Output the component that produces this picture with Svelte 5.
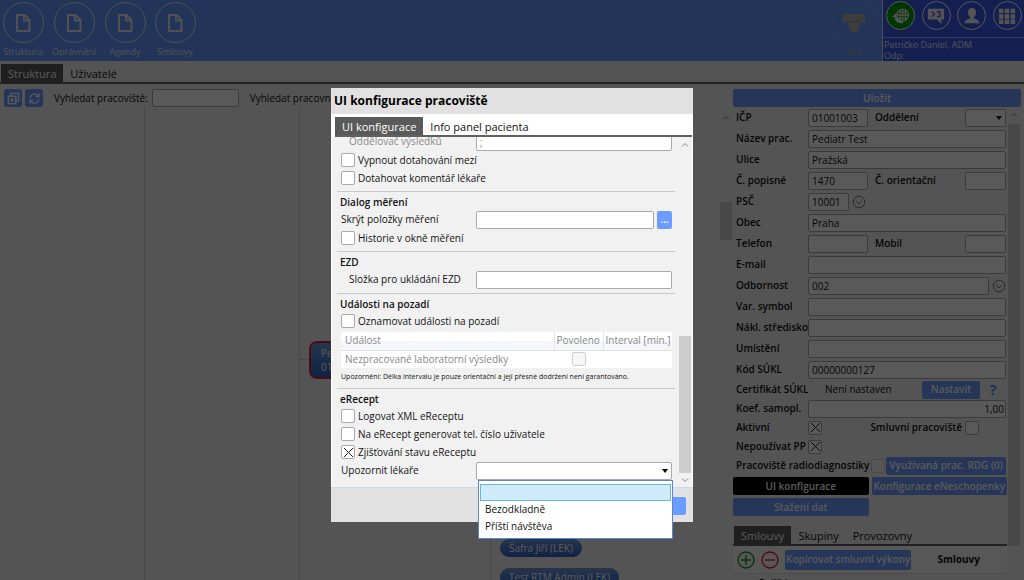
<script>
	const tools = ['Struktura', 'Oprávnění', 'Agendy', 'Smlouvy'];
	const notifyOptions = ['', 'Bezodkladně', 'Příští návštěva'];

	let workplace = $state({
		icp: '01001003',
		name: 'Pediatr Test',
		street: 'Pražská',
		houseNo: '1470',
		zip: '10001',
		city: 'Praha',
		specialty: '002',
		sukl: '00000000127',
		coef: '1,00'
	});

	let config = $state({
		separator: ';',
		noLimits: false,
		comment: false,
		history: false,
		notifyEvents: false,
		logXml: false,
		phone: false,
		checkState: true
	});

	let notify = $state('');
	let menuOpen = $state(true);

	const pick = (option) => {
		notify = option;
		menuOpen = false;
	};
</script>

{#snippet check(key, text)}
	<label class="check-row">
		<input type="checkbox" bind:checked={config[key]} />
		{text}
	</label>
{/snippet}

{#snippet chevron(d)}
	<svg class="chevron" viewBox="0 0 8 8"><path {d} /></svg>
{/snippet}

{#snippet roundChevron()}
	<svg viewBox="0 0 14 14" class="round-chevron">
		<circle cx="7" cy="7" r="5.8" />
		<path d="M4 6l3 3 3-3" />
	</svg>
{/snippet}

<div class="app">
	<header>
		<nav class="tools">
			{#each tools as tool}
				<button class="tool">
					<span class="ring">
						<svg viewBox="0 0 16 20"><path d="M2 2h7.500l5 5v11H2zM9 2v5.500h5.500" /></svg>
					</span>
					{tool}
				</button>
			{/each}
		</nav>
		<button class="tool print" disabled>
			<span class="ring">
				<svg viewBox="0 0 24 20">
					<path d="M1 1h22v9h-3.500V8h-15v2H1z" />
					<path d="M6 9h12v4h-2v6H8v-6H6z" />
				</svg>
			</span>
			Tisk
		</button>
		<div class="user">
			<div class="user-icons">
				<button class="round online" aria-label="Připojení">
					<svg viewBox="0 0 20 20">
						<circle cx="12" cy="9" r="6.500" class="line" />
						<path class="line" d="M12 2.500v13M5.500 9h13M6.500 5.500h11M6.500 12.500h11M9 3.500v11M15 3.500v11" />
						<path d="M0 11l5-5v3.500c0 4 3 6 7 6V18C6 18 3 15.500 3 11z" />
					</svg>
				</button>
				<button class="round" aria-label="Zprávy">
					<svg viewBox="0 0 20 20">
						<path fill-rule="evenodd" d="M1 2h18v12h-3v5l-5-5H1zM5 4.500v1.500l2.500 2L5 10v1.500l4-3v-1zM11 4.500V6h2.500v4H11v1.500h4v-7z" />
					</svg>
				</button>
				<button class="round" aria-label="Uživatel">
					<svg viewBox="0 0 20 20">
						<path d="M10 1c3 0 4.500 2 4.500 5 0 2.500-1 4-2.300 5.200v1.600c3 1 6 1.700 6 5.200H1.800c0-3.500 3-4.200 6-5.200v-1.600C6.500 10 5.500 8.500 5.500 6c0-3 1.500-5 4.500-5z" />
					</svg>
				</button>
				<button class="round" aria-label="Moduly">
					<svg viewBox="0 0 20 20">
						<path d="M1 2h5v5H1zM7.500 2h5v5h-5zM14 2h5v5h-5zM1 8h5v5H1zM7.500 8h5v5h-5zM14 8h5v5h-5zM1 14h5v5H1zM7.500 14h5v5h-5zM14 14h5v5h-5z" />
					</svg>
				</button>
			</div>
			<p>Petričko Daniel, ADM</p>
			<p>Odp:</p>
		</div>
	</header>

	<nav class="tabs main-tabs">
		<button class="tab active">Struktura</button>
		<button class="tab">Uživatelé</button>
	</nav>

	<div class="content">
		<main>
			<div class="search">
				<button class="square" aria-label="Rozbalit">
					<svg viewBox="0 0 14 14"><path d="M4.500 4V1.500h8v8H10M1.500 4.500h8v8h-8zM5.500 6.500v4M3.500 8.500h4" /></svg>
				</button>
				<button class="square" aria-label="Obnovit">
					<svg viewBox="0 0 14 14"><path d="M2 6c1-4 6-5 8.500-2.500L12 5M12 1.500V5H8.500M12 8c-1 4-6 5-8.500 2.500L2 9M2 12.500V9h3.500" /></svg>
				</button>
				<label for="find-place">Vyhledat pracoviště:</label>
				<input id="find-place" type="text" />
				<label for="find-worker">Vyhledat pracovníka:</label>
				<input id="find-worker" type="text" />
			</div>
			<div class="canvas">
				<i class="guide first"></i>
				<i class="guide second"></i>
				<i class="guide third"></i>
				<i class="link"></i>
				<div class="node place">Pe<br />01</div>
				<div class="node person">Šafra Jiří (LEK)</div>
				<div class="node person last">Test RTM Admin (LEK)</div>
			</div>
		</main>

		<div class="scroll outer">
			{@render chevron('M1 5.500l3-3 3 3')}
			<i class="thumb"></i>
		</div>

		<aside>
			<button class="blue save">Uložit</button>
			<div class="panel">
				<form>
					<div class="field">
						<label for="icp">IČP</label>
						<input id="icp" class="half" type="text" bind:value={workplace.icp} />
						<label for="dept" class="second">Oddělení</label>
						<span class="select small">
							<select id="dept"><option></option></select>
						</span>
					</div>
					<div class="field">
						<label for="name">Název prac.</label>
						<input id="name" type="text" bind:value={workplace.name} />
					</div>
					<div class="field">
						<label for="street">Ulice</label>
						<input id="street" type="text" bind:value={workplace.street} />
					</div>
					<div class="field">
						<label for="house">Č. popisné</label>
						<input id="house" class="half" type="text" bind:value={workplace.houseNo} />
						<label for="orient" class="second">Č. orientační</label>
						<input id="orient" class="small" type="text" />
					</div>
					<div class="field">
						<label for="zip">PSČ</label>
						<input id="zip" class="small" type="text" bind:value={workplace.zip} />
						{@render roundChevron()}
					</div>
					<div class="field">
						<label for="city">Obec</label>
						<input id="city" type="text" bind:value={workplace.city} />
					</div>
					<div class="field">
						<label for="phone">Telefon</label>
						<input id="phone" class="half" type="text" />
						<label for="mobile" class="second">Mobil</label>
						<input id="mobile" class="small" type="text" />
					</div>
					<div class="field">
						<label for="email">E-mail</label>
						<input id="email" type="text" />
					</div>
					<div class="field">
						<label for="spec">Odbornost</label>
						<input id="spec" type="text" bind:value={workplace.specialty} />
						{@render roundChevron()}
					</div>
					<div class="field">
						<label for="symbol">Var. symbol</label>
						<input id="symbol" type="text" />
					</div>
					<div class="field">
						<label for="centre">Nákl. středisko</label>
						<input id="centre" type="text" />
					</div>
					<div class="field">
						<label for="location">Umístění</label>
						<input id="location" type="text" />
					</div>
					<div class="field">
						<label for="sukl">Kód SÚKL</label>
						<input id="sukl" type="text" bind:value={workplace.sukl} />
					</div>
					<div class="field tight">
						<span class="name">Certifikát SÚKL</span>
						<span class="state">Není nastaven</span>
						<button type="button" class="blue set">Nastavit</button>
						<button type="button" class="help">?</button>
					</div>
					<div class="field tight">
						<label for="coef">Koef. samopl.</label>
						<input id="coef" class="number" type="text" bind:value={workplace.coef} />
					</div>
					<div class="field tight">
						<label for="active">Aktivní</label>
						<input id="active" type="checkbox" checked />
						<label for="contract" class="third">Smluvní pracoviště</label>
						<input id="contract" class="offset" type="checkbox" />
					</div>
					<div class="field tight">
						<label for="nopp">Nepoužívat PP</label>
						<input id="nopp" type="checkbox" checked />
					</div>
					<div class="field tight">
						<label for="rdg" class="wide">Pracoviště radiodiagnostiky</label>
						<input id="rdg" type="checkbox" disabled />
						<button type="button" class="blue rdg">Využívaná prac. RDG (0)</button>
					</div>
					<div class="actions">
						<button type="button" class="blue black">UI konfigurace</button>
						<button type="button" class="blue">Konfigurace eNeschopenky</button>
						<button type="button" class="blue">Stažení dat</button>
					</div>
					<nav class="tabs side-tabs">
						<button type="button" class="tab active">Smlouvy</button>
						<button type="button" class="tab">Skupiny</button>
						<button type="button" class="tab">Provozovny</button>
					</nav>
					<div class="contracts">
						<button type="button" class="sign add" aria-label="Přidat">
							<svg viewBox="0 0 18 18"><circle cx="9" cy="9" r="8" /><path d="M9 4v10M4 9h10" /></svg>
						</button>
						<button type="button" class="sign remove" aria-label="Odebrat">
							<svg viewBox="0 0 18 18"><circle cx="9" cy="9" r="8" /><path d="M4 9h10" /></svg>
						</button>
						<button type="button" class="blue copy">Kopírovat smluvní výkony</button>
						<strong>Smlouvy</strong>
					</div>
					<div class="insurer">Pojišť.</div>
				</form>
				<div class="scroll side">
					{@render chevron('M1 5.500l3-3 3 3')}
					<i class="thumb"></i>
				</div>
			</div>
		</aside>
	</div>
</div>

<div class="overlay">
	<div class="dialog" role="dialog" aria-labelledby="dialog-title">
		<h1 id="dialog-title">UI konfigurace pracoviště</h1>
		<nav class="tabs dialog-tabs">
			<button class="tab active">UI konfigurace</button>
			<button class="tab">Info panel pacienta</button>
		</nav>
		<div class="body">
			<div class="sections">
				<section>
					<div class="row muted">
						<label class="indent" for="separator">Oddělovač výsledků</label>
						<input id="separator" type="text" disabled bind:value={config.separator} />
					</div>
					{@render check('noLimits', 'Vypnout dotahování mezí')}
					{@render check('comment', 'Dotahovat komentář lékaře')}
				</section>
				<section>
					<h2>Dialog měření</h2>
					<div class="row">
						<label for="hide-items">Skrýt položky měření</label>
						<input id="hide-items" type="text" />
						<button class="blue dots">...</button>
					</div>
					{@render check('history', 'Historie v okně měření')}
				</section>
				<section>
					<h2>EZD</h2>
					<div class="row">
						<label class="indent" for="folder">Složka pro ukládání EZD</label>
						<input id="folder" type="text" />
					</div>
				</section>
				<section>
					<h2>Události na pozadí</h2>
					{@render check('notifyEvents', 'Oznamovat události na pozadí')}
					<table>
						<thead>
							<tr>
								<th>Událost</th>
								<th class="allowed">Povoleno</th>
								<th class="interval">Interval [min.]</th>
							</tr>
						</thead>
						<tbody>
							<tr>
								<td>Nezpracované laboratorní výsledky</td>
								<td><input type="checkbox" disabled aria-label="Povoleno" /></td>
								<td></td>
							</tr>
						</tbody>
					</table>
					<p class="note">Upozornění: Délka intervalu je pouze orientační a její přesné dodržení není garantováno.</p>
				</section>
				<section>
					<h2>eRecept</h2>
					{@render check('logXml', 'Logovat XML eReceptu')}
					{@render check('phone', 'Na eRecept generovat tel. číslo uživatele')}
					{@render check('checkState', 'Zjišťování stavu eReceptu')}
					<div class="row">
						<label for="notify">Upozornit lékaře</label>
						<div class="combo">
							<span class="select">
								<select id="notify" bind:value={notify}>
									{#each notifyOptions as option}
										<option value={option}>{option}</option>
									{/each}
								</select>
							</span>
							{#if menuOpen}
								<div class="menu">
									{#each notifyOptions as option}
										<button class:selected={option === notify} aria-label={option || 'Prázdné'} onclick={() => pick(option)}>{option}</button>
									{/each}
								</div>
							{/if}
						</div>
					</div>
				</section>
			</div>
			<div class="scroll inner">
				{@render chevron('M1 5.500l3-3 3 3')}
				<i class="thumb"></i>
				{@render chevron('M1 2.500l3 3 3-3')}
			</div>
		</div>
		<footer>
			<button class="blue ok" aria-label="Uložit konfiguraci"></button>
		</footer>
	</div>
</div>

<style>
	:global(body) {
		margin: 0;
		background: #f0f0f0;
	}

	.app,
	.overlay {
		font-family: 'Open Sans', 'Noto Sans', sans-serif;
		font-size: 10px;
		line-height: 15px;
		color: #111;
	}

	.app *,
	.overlay * {
		box-sizing: border-box;
	}

	.app {
		height: 100vh;
		display: flex;
		flex-direction: column;
		overflow: hidden;
		background: #f0f0f0;
	}

	button,
	input,
	select {
		font: inherit;
		color: inherit;
		margin: 0;
		padding: 0;
	}

	button {
		border: 0;
		background: none;
		white-space: nowrap;
	}

	p {
		margin: 0;
	}

	input[type='text'],
	select {
		height: 18px;
		min-width: 0;
		padding: 0 3px;
		border: 1px solid #aaa;
		border-radius: 2px;
		background: #fff;
	}

	input[type='checkbox'] {
		appearance: none;
		flex: none;
		width: 14px;
		height: 14px;
		border: 1px solid #aaa;
		border-radius: 2px;
		background: #fff;
	}

	input[type='checkbox']:checked {
		background:
			linear-gradient(45deg, transparent 46%, #222 46%, #222 54%, transparent 54%) center / 9px 9px no-repeat,
			linear-gradient(-45deg, transparent 46%, #222 46%, #222 54%, transparent 54%) center / 9px 9px no-repeat,
			#fff;
	}

	input[type='checkbox']:disabled {
		border-color: #d0d0d0;
		background: #f6f6f6;
	}

	.select {
		position: relative;
		display: flex;
	}

	.select select {
		appearance: none;
		width: 100%;
	}

	/* drop-down arrow */
	.select::after {
		content: '';
		position: absolute;
		right: 4px;
		top: 7px;
		border: 3px solid transparent;
		border-top: 4px solid #000;
		border-bottom: 0;
	}

	.blue {
		height: 18px;
		border-radius: 2px;
		background: #6b9cff;
		color: #fff;
		font-weight: 600;
	}

	/* Tabs */
	.tabs {
		display: flex;
		border-bottom: 2px solid #606060;
		font-size: 11px;
	}

	.tab {
		padding: 0 7px;
		height: 18px;
	}

	.tab.active {
		background: #5a5a5a;
		color: #fff;
	}

	.main-tabs {
		padding: 3px 0 0 1px;
	}

	/* Header */
	header {
		display: flex;
		height: 61px;
		flex: none;
		background: #6199ff;
		color: #e4e6ee;
		font-size: 9px;
	}

	.tools {
		display: flex;
		flex: 1;
		gap: 8px;
		padding-left: 2px;
	}

	.tool {
		display: flex;
		flex-direction: column;
		align-items: center;
		min-width: 42px;
		padding-top: 2px;
		gap: 1px;
	}

	.ring {
		display: flex;
		align-items: center;
		justify-content: center;
		width: 41px;
		height: 41px;
		border: 1px solid #dce4f4;
		border-radius: 50%;
	}

	.ring svg {
		width: 16px;
		height: 20px;
		fill: none;
		stroke: #e8e8e8;
		stroke-width: 2;
	}

	.print {
		margin-right: 7px;
		color: #a8a8b0;
	}

	.print .ring {
		border-color: #78a0ea;
	}

	.print .ring svg {
		width: 24px;
		fill: #b4b0a8;
		stroke: none;
	}

	.user {
		width: 142px;
		border-left: 1px solid #dde;
		background: #385be8;
	}

	.user p {
		padding-left: 1px;
		line-height: 11px;
	}

	.user-icons {
		display: flex;
		justify-content: space-between;
		height: 38px;
		margin-bottom: 1px;
		padding: 1px 2px 0 3px;
		border-bottom: 1px solid #90a8ff;
	}

	.round {
		display: flex;
		align-items: center;
		justify-content: center;
		width: 29px;
		height: 29px;
		border: 1px solid #fff;
		border-radius: 50%;
	}

	.round svg {
		width: 18px;
		height: 18px;
		fill: #f0f0f0;
	}

	.round .line {
		fill: none;
		stroke: #f0f0f0;
		stroke-width: 1.2;
	}

	.online {
		background: #009a00;
	}

	/* Structure canvas */
	.content {
		display: flex;
		flex: 1;
		min-height: 0;
	}

	main {
		display: flex;
		flex-direction: column;
		flex: 1;
		min-width: 0;
	}

	.search {
		display: flex;
		align-items: center;
		gap: 3px;
		padding: 5px 0 0 4px;
		white-space: nowrap;
		overflow: hidden;
	}

	.search label {
		margin: 0 1px 0 8px;
	}

	.search input {
		width: 87px;
	}

	.square {
		display: flex;
		align-items: center;
		justify-content: center;
		width: 18px;
		height: 18px;
		border-radius: 3px;
		background: #6b9cff;
	}

	.square svg {
		width: 13px;
		height: 13px;
		fill: none;
		stroke: #fff;
		stroke-width: 1.5;
	}

	.canvas {
		position: relative;
		flex: 1;
		overflow: hidden;
	}

	.guide {
		position: absolute;
		top: 0;
		bottom: 0;
		border-left: 1px solid #ccc;
	}

	.guide.first {
		left: 144px;
	}

	.guide.second {
		left: 299px;
	}

	.guide.third {
		left: 490px;
	}

	.link {
		position: absolute;
		left: 299px;
		top: 252px;
		width: 12px;
		border-top: 1px solid #ccc;
	}

	.node {
		position: absolute;
		color: #fff;
		background: linear-gradient(#6a9bd8, #2f5fc8);
	}

	.place {
		left: 309px;
		top: 234px;
		width: 120px;
		padding: 3px 10px;
		border: 2px solid #c03040;
		border-radius: 8px;
		line-height: 14px;
	}

	.person {
		left: 500px;
		top: 432px;
		padding: 2px 9px 1px;
		border-radius: 9px;
	}

	.person.last {
		top: 461px;
	}

	/* Scrollbars */
	.scroll {
		display: flex;
		flex-direction: column;
		align-items: center;
		flex: none;
		width: 14px;
	}

	.chevron {
		width: 8px;
		height: 8px;
		fill: none;
		stroke: #888;
	}

	.thumb {
		width: 12px;
		background: #cdcdcd;
	}

	.outer {
		padding-top: 30px;
	}

	.outer .thumb {
		height: 38px;
		margin-top: 80px;
	}

	.side .thumb {
		flex: 1;
		margin: 5px 0 34px;
	}

	.side {
		padding-top: 4px;
	}

	.inner {
		padding: 4px 0 3px;
	}

	.inner .thumb {
		height: 137px;
		margin: auto 0 3px;
	}

	/* Workplace detail */
	aside {
		display: flex;
		flex-direction: column;
		width: 291px;
		padding: 5px 3px 0 0;
	}

	.save {
		flex: none;
	}

	.panel {
		display: flex;
		flex: 1;
		min-height: 0;
	}

	form {
		flex: 1;
		min-width: 0;
		overflow: hidden;
	}

	.field {
		display: flex;
		align-items: center;
		height: 21px;
		padding: 0 1px 0 3px;
	}

	.field.tight {
		height: 19px;
	}

	.field label,
	.field .name {
		flex: none;
		width: 72px;
		font-weight: 600;
		white-space: nowrap;
	}

	.field input[type='text'] {
		flex: 1;
	}

	.field input.half {
		flex: none;
		width: 60px;
	}

	.field label.second {
		flex: 1;
		padding-left: 7px;
	}

	.field .small,
	.field input.small {
		flex: none;
		width: 41px;
	}

	.field label.third {
		width: auto;
		margin-left: auto;
	}

	.field .offset {
		margin: 0 27px 0 3px;
	}

	.field label.wide {
		width: auto;
		margin-right: 2px;
	}

	.round-chevron {
		width: 14px;
		height: 14px;
		margin-left: 3px;
		fill: none;
		stroke: #777;
	}

	.state {
		flex: 1;
		padding-left: 17px;
	}

	.set {
		width: 58px;
	}

	.help {
		width: 26px;
		color: #5c8cff;
		font-size: 15px;
		font-weight: 700;
	}

	.field input.number {
		padding: 0 1px;
		text-align: right;
	}

	.rdg {
		flex: none;
		margin-left: auto;
		padding: 0 3px;
	}

	.actions {
		display: grid;
		grid-template-columns: 1fr 1fr;
		gap: 3px;
		padding-top: 2px;
	}

	.actions .black {
		background: #000;
	}

	.side-tabs {
		margin-top: 10px;
		padding-left: 1px;
	}

	.contracts {
		display: flex;
		align-items: center;
		gap: 6px;
		height: 28px;
		padding-left: 4px;
		border-bottom: 1px solid #ddd;
		background: #f8f8f8;
	}

	.contracts strong {
		flex: 1;
		padding-right: 7px;
		text-align: center;
	}

	.sign {
		height: 18px;
	}

	.sign svg {
		width: 18px;
		height: 18px;
		fill: none;
		stroke-width: 1.3;
	}

	.add {
		stroke: #0a8a20;
	}

	.remove {
		stroke: #e01020;
	}

	.copy {
		height: 20px;
		padding: 0 1px;
	}

	.insurer {
		padding: 2px 0 0 26px;
		font-weight: 600;
	}

	/* Dialog */
	.overlay {
		position: fixed;
		inset: 0;
		display: flex;
		justify-content: center;
		align-items: flex-start;
		padding-top: 88px;
		background: rgba(0, 0, 0, 0.65);
	}

	.dialog {
		position: relative;
		width: 362px;
		background: #fff;
	}

	h1 {
		margin: 0;
		padding: 4px 3px;
		background: #e1e1e1;
		color: #000;
		font-size: 12px;
		line-height: 18px;
		font-weight: 700;
	}

	.dialog-tabs {
		margin: 0 1px 0 4px;
		padding-top: 3px;
	}

	.body {
		display: flex;
		height: 350px;
		margin: 0 1px;
		overflow: hidden;
		background: #f1f1f1;
	}

	/* scrolled to the end, the first row is cut by the tabs */
	.sections {
		display: flex;
		flex: 1;
		flex-direction: column;
		justify-content: flex-end;
		padding: 0 3px 0 5px;
	}

	section {
		flex: none;
		padding: 3px 3px 4px 4px;
		border-bottom: 1px solid #c8c8c8;
	}

	section:last-child {
		padding-bottom: 7px;
		border: 0;
	}

	h2 {
		margin: 0 -1px;
		color: #111;
		font-size: 10px;
		line-height: 15px;
		font-weight: 600;
	}

	.row {
		display: flex;
		align-items: center;
		height: 19px;
	}

	.row label {
		flex: none;
		width: 135px;
	}

	.row .indent {
		padding-left: 8px;
	}

	.row input {
		flex: 1;
	}

	.muted {
		color: #8a8a8a;
	}

	.dots {
		width: 15px;
		margin-left: 3px;
	}

	.check-row {
		display: flex;
		align-items: center;
		gap: 3px;
		height: 18px;
	}

	table {
		width: 100%;
		margin-top: 2px;
		border-collapse: collapse;
		table-layout: fixed;
		background: #fff;
		color: #888;
	}

	th,
	td {
		height: 18px;
		padding: 0 4px;
		text-align: left;
		font-weight: 400;
		white-space: nowrap;
	}

	th {
		border-bottom: 1px solid #e0e0e0;
		background: linear-gradient(#fff 50%, #f5f6fa 50%);
	}

	.allowed,
	.interval {
		padding: 0 2px;
		border-left: 1px solid #e4e4e4;
	}

	.allowed {
		width: 49px;
	}

	.interval {
		width: 69px;
	}

	td input[type='checkbox'] {
		display: block;
		margin: 0 auto;
	}

	.note {
		padding-top: 2px;
		font-size: 7px;
		line-height: 14px;
	}

	.combo {
		flex: 1;
	}

	.menu {
		position: absolute;
		right: 20px;
		z-index: 1;
		display: flex;
		flex-direction: column;
		width: 195px;
		padding: 3px 1px;
		border: 1px solid #5b86d8;
		background: #fff;
	}

	.menu button {
		height: 17px;
		padding: 0 4px;
		border: 1px solid transparent;
		text-align: left;
	}

	.menu .selected {
		border-color: #6db5d8;
		background: #cdebf8;
	}

	footer {
		display: flex;
		justify-content: flex-end;
		padding: 9px 7px 7px;
		border-top: 1px solid #cddbe6;
		background: #e1e1e1;
	}

	.ok {
		width: 66px;
	}
</style>
